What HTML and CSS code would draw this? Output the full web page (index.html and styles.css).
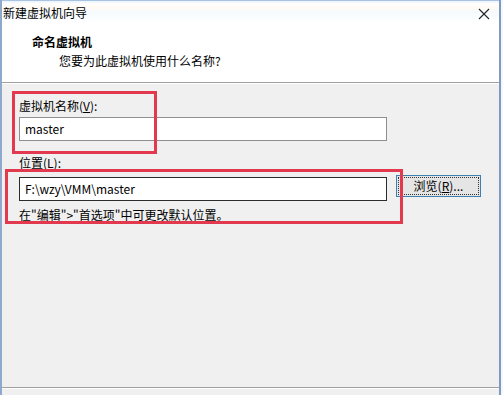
FILE: index.html
```html
<!DOCTYPE html>
<html lang="zh-CN">
<head>
    <meta charset="UTF-8" />
    <title>新建虚拟机向导</title>
    <link rel="stylesheet" href="styles.css">
</head>
<body>

<div class="window">

    <!-- Title bar -->
    <div class="titlebar">
        <span class="title">新建虚拟机向导</span>
        <svg class="close" width="12" height="12" viewBox="0 0 12 12">
            <path d="M1 1 L11 11 M11 1 L1 11" stroke="#222" stroke-width="1.1" fill="none"/>
        </svg>
    </div>

    <!-- Wizard header -->
    <div class="header">
        <div class="header-title">命名虚拟机</div>
        <div class="header-sub">您要为此虚拟机使用什么名称?</div>
    </div>

    <!-- Form body -->
    <div class="body">
        <div class="label label-name">虚拟机名称(<u>V</u>):</div>
        <div class="field">master</div>

        <div class="label label-loc">位置(<u>L</u>):</div>
        <div class="row">
            <div class="field field-focus">F:\wzy\VMM\master</div>
            <button class="browse">浏览(<u>R</u>)...</button>
        </div>
        <div class="hint">在"编辑"&gt;"首选项"中可更改默认位置。</div>

        <!-- annotation boxes -->
        <div class="mark mark-name"></div>
        <div class="mark mark-loc"></div>
    </div>

    <div class="footer"></div>
</div>

</body>
</html>
```

FILE: styles.css
```css
* {
  box-sizing: border-box;
  margin: 0;
  padding: 0;
}

body {
  width: 503px;
  height: 395px;
  overflow: hidden;
  background: #f4f7fb;
  font-family: "Noto Sans CJK SC", "Noto Sans", sans-serif;
  font-size: 12px;
  color: #000;
}

.window {
  width: 501px;
  height: 395px;
  display: flex;
  flex-direction: column;
  border-left: 2px solid #8ea9cb;
  border-right: 2px solid #7e9bbf;
  background: #f0f0f0;
}

.titlebar {
  height: 24px;
  display: flex;
  align-items: center;
  justify-content: space-between;
  padding: 0 9px 0 1px;
  background: linear-gradient(#eaf2fb 0, #ffffff 3px, #fffaf2 6px, #f6fbff 12px, #ffffff 22px);
  border-top: 1px solid #a9c3e2;
}

.title {
  line-height: 16px;
}

.close {
  margin-top: 2px;
}

.header {
  height: 59px;
  background: #fff;
  border-bottom: 1px solid #a0a0a0;
  padding: 10px 0 0 30px;
}

.header-title {
  font-weight: bold;
  line-height: 16px;
}

.header-sub {
  line-height: 16px;
  padding: 3px 0 0 27px;
}

.body {
  position: relative;
  flex: 1;
  padding: 0 17px;
  border-top: 1px solid #fff;
}

.label {
  line-height: 16px;
}

.label-name {
  margin-top: 14px;
}

.label-loc {
  margin-top: 14px;
}

.field {
  width: 368px;
  height: 24px;
  margin-top: 3px;
  padding: 0 5px;
  line-height: 22px;
  background: #fff;
  border: 1px solid #8f8f8f;
}

.row {
  display: flex;
  align-items: flex-start;
  gap: 9px;
  margin-top: 3px;
}

.field-focus {
  border-color: #2b2b2b;
}

.browse {
  width: 85px;
  height: 22px;
  margin-top: 1px;
  font: inherit;
  line-height: 16px;
  background: #e5e5e5;
  border: 1px solid #3c7fb1;
  outline: 1px dotted #333;
  outline-offset: -3px;
  color: #000;
}

.hint {
  margin-top: 6px;
  line-height: 16px;
}

.mark {
  position: absolute;
  border: 3px solid #e2394e;
}

.mark-name {
  left: 10px;
  top: 7px;
  width: 145px;
  height: 63px;
}

.mark-loc {
  left: 3px;
  top: 85px;
  width: 398px;
  height: 55px;
}

.footer {
  height: 8px;
  border-top: 1px solid #a0a0a0;
  box-shadow: inset 0 1px 0 #fff;
}
```
